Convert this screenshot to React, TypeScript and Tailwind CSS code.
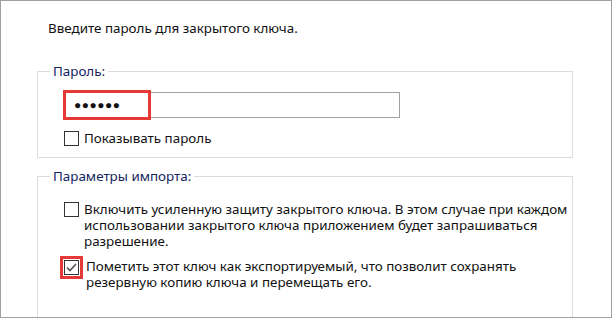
import React from "react";

const font = { fontFamily: '"Noto Sans", "Open Sans", sans-serif' };

function CheckBox({ checked = false }: { checked?: boolean }) {
  return (
    <span className="w-[15px] h-[15px] shrink-0 border border-[#333] bg-white flex items-center justify-center">
      {checked && (
        <svg width="11" height="9" viewBox="0 0 11 9">
          <path d="M1 4.5 L4 7.5 L10 1" fill="none" stroke="#555" strokeWidth="1.6" />
        </svg>
      )}
    </span>
  );
}

export default function App() {
  return (
    <div
      className="w-[612px] h-[318px] border border-[#a0a0a0] bg-white overflow-hidden text-[13.4px] text-[#111]"
      style={font}
    >
      <div className="pl-[47px] pt-[18px] leading-[18px]">Введите пароль для закрытого ключа.</div>

      <fieldset className="ml-[36px] w-[536px] mt-[26px] h-[95px] border border-[#dcdcdc] pl-[26px] pr-0">
        <legend className="ml-[-14px] px-[3px] leading-[16px] text-[#14245e]">Пароль:</legend>
        <div className="mt-[13px] w-[336px] h-[26px] border border-[#a0a0a0] flex items-center">
          <span className="ml-[-2px] w-[88px] h-[30px] border-[3px] border-[#e53935] flex items-center pl-[8px] text-[12px] tracking-[0.5px]">
            ●●●●●●
          </span>
        </div>
        <div className="mt-[12px] flex items-center gap-[5px]">
          <CheckBox />
          <span className="leading-[16px]">Показывать пароль</span>
        </div>
      </fieldset>

      <fieldset className="ml-[36px] w-[536px] mt-[10px] h-[160px] border border-[#dcdcdc] pl-[26px] pr-[4px]">
        <legend className="ml-[-14px] px-[3px] leading-[16px] text-[#14245e]">Параметры импорта:</legend>
        <div className="mt-[17px] flex items-start gap-[5px]">
          <span className="mt-[1px]">
            <CheckBox />
          </span>
          <span className="leading-[16px]">
            Включить усиленную защиту закрытого ключа. В этом случае при каждом использовании закрытого
            ключа приложением будет запрашиваться разрешение.
          </span>
        </div>
        <div className="mt-[7px] flex items-start gap-[3px] ml-[-4px]">
          <span className="border-[3px] border-[#e53935] p-[1px]">
            <CheckBox checked />
          </span>
          <span className="leading-[16px] mt-[2px]">
            Пометить этот ключ как экспортируемый, что позволит сохранять резервную копию ключа и
            перемещать его.
          </span>
        </div>
      </fieldset>
    </div>
  );
}
